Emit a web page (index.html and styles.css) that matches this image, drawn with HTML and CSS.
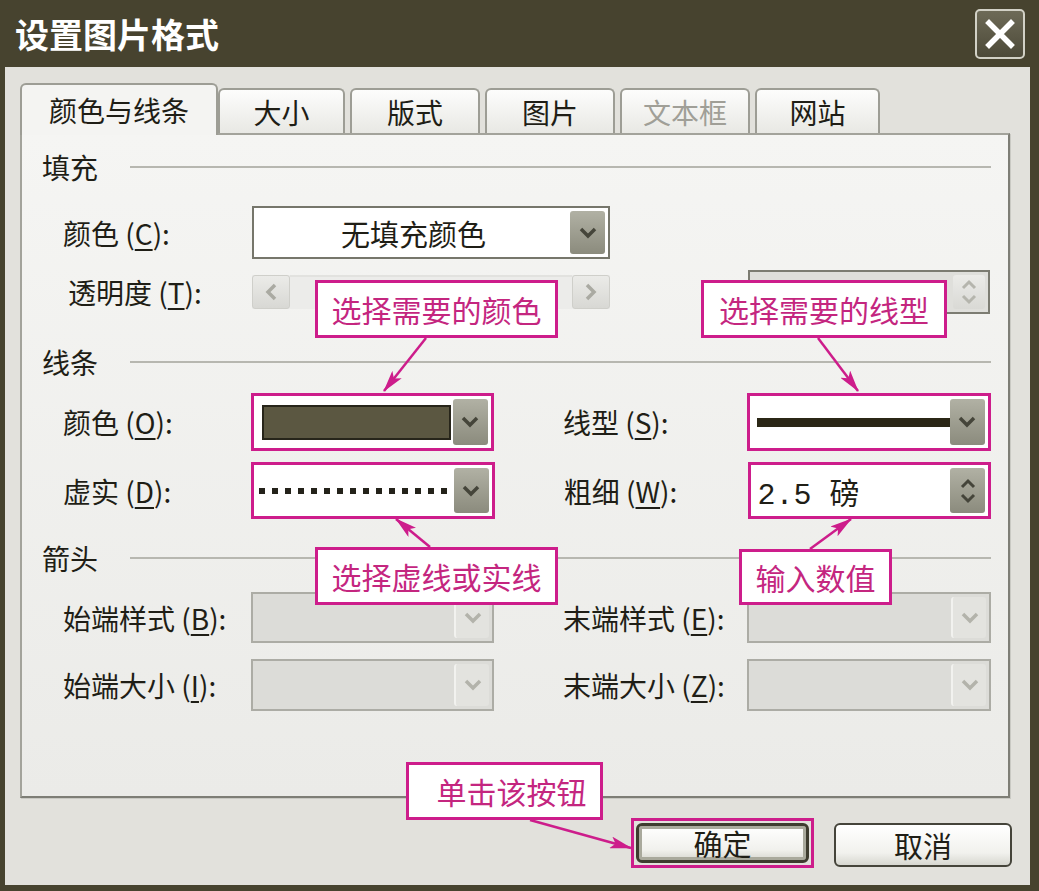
FILE: index.html
```html
<!DOCTYPE html>
<html lang="zh-CN">
<head>
<meta charset="UTF-8">
<title>设置图片格式</title>
<link rel="stylesheet" href="styles.css">
</head>
<body>
  <div class="window">
    <div class="titlebar">
      <span class="title">设置图片格式</span>
      <div class="close-btn">
        <svg width="34" height="34" viewBox="0 0 34 34"><path d="M6 6 L28 28 M28 6 L6 28" stroke="#fff" stroke-width="5.5" stroke-linecap="square"/></svg>
      </div>
    </div>

    <div class="client">
      <div class="tabs">
        <div class="tab active">颜色与线条</div>
        <div class="tab">大小</div>
        <div class="tab">版式</div>
        <div class="tab">图片</div>
        <div class="tab disabled">文本框</div>
        <div class="tab">网站</div>
      </div>

      <div class="panel">
        <div class="section-head"><span>填充</span><i class="rule"></i></div>
        <div class="row row-fill">
          <div class="lbl">颜色 (<u>C</u>):</div>
          <div class="combo wide">
            <span class="combo-text">无填充颜色</span>
            <span class="drop"><svg width="18" height="12" viewBox="0 0 18 12"><path d="M2 2 L9 9 L16 2" fill="none" stroke="currentColor" stroke-width="3.5"/></svg></span>
          </div>
        </div>
        <div class="row row-alpha">
          <div class="lbl lbl-alpha">透明度 (<u>T</u>):</div>
          <div class="slider">
            <span class="sbtn"><svg width="12" height="18" viewBox="0 0 12 18"><path d="M10 2 L3 9 L10 16" fill="none" stroke="currentColor" stroke-width="3.5"/></svg></span>
            <span class="track"></span>
            <span class="sbtn"><svg width="12" height="18" viewBox="0 0 12 18"><path d="M2 2 L9 9 L2 16" fill="none" stroke="currentColor" stroke-width="3.5"/></svg></span>
          </div>
          <div class="spin dis alpha-spin">
            <span class="spin-text"></span>
            <span class="spbtn"><svg width="18" height="30" viewBox="0 0 18 30"><path d="M3 11 L9 5 L15 11 M3 19 L9 25 L15 19" fill="none" stroke="currentColor" stroke-width="3"/></svg></span>
          </div>
        </div>

        <div class="section-head s2"><span>线条</span><i class="rule"></i></div>
        <div class="row row-o">
          <div class="lbl">颜色 (<u>O</u>):</div>
          <div class="combo hl">
            <span class="swatch"></span>
            <span class="drop"><svg width="18" height="12" viewBox="0 0 18 12"><path d="M2 2 L9 9 L16 2" fill="none" stroke="currentColor" stroke-width="3.5"/></svg></span>
          </div>
          <div class="lbl lbl-r">线型 (<u>S</u>):</div>
          <div class="combo hl r">
            <span class="solid-line"></span>
            <span class="drop"><svg width="18" height="12" viewBox="0 0 18 12"><path d="M2 2 L9 9 L16 2" fill="none" stroke="currentColor" stroke-width="3.5"/></svg></span>
          </div>
        </div>
        <div class="row row-d">
          <div class="lbl">虚实 (<u>D</u>):</div>
          <div class="combo hl">
            <span class="dots"></span>
            <span class="drop"><svg width="18" height="12" viewBox="0 0 18 12"><path d="M2 2 L9 9 L16 2" fill="none" stroke="currentColor" stroke-width="3.5"/></svg></span>
          </div>
          <div class="lbl lbl-r">粗细 (<u>W</u>):</div>
          <div class="spin hl r">
            <span class="spin-text">2.5 磅</span>
            <span class="spbtn"><svg width="18" height="30" viewBox="0 0 18 30"><path d="M3 11 L9 5 L15 11 M3 19 L9 25 L15 19" fill="none" stroke="currentColor" stroke-width="3"/></svg></span>
          </div>
        </div>

        <div class="section-head s3"><span>箭头</span><i class="rule"></i></div>
        <div class="row row-b">
          <div class="lbl">始端样式 (<u>B</u>):</div>
          <div class="combo dis">
            <span class="drop"><svg width="18" height="12" viewBox="0 0 18 12"><path d="M2 2 L9 9 L16 2" fill="none" stroke="currentColor" stroke-width="3.5"/></svg></span>
          </div>
          <div class="lbl lbl-r">末端样式 (<u>E</u>):</div>
          <div class="combo dis r">
            <span class="drop"><svg width="18" height="12" viewBox="0 0 18 12"><path d="M2 2 L9 9 L16 2" fill="none" stroke="currentColor" stroke-width="3.5"/></svg></span>
          </div>
        </div>
        <div class="row row-i">
          <div class="lbl">始端大小 (<u>I</u>):</div>
          <div class="combo dis">
            <span class="drop"><svg width="18" height="12" viewBox="0 0 18 12"><path d="M2 2 L9 9 L16 2" fill="none" stroke="currentColor" stroke-width="3.5"/></svg></span>
          </div>
          <div class="lbl lbl-r">末端大小 (<u>Z</u>):</div>
          <div class="combo dis r">
            <span class="drop"><svg width="18" height="12" viewBox="0 0 18 12"><path d="M2 2 L9 9 L16 2" fill="none" stroke="currentColor" stroke-width="3.5"/></svg></span>
          </div>
        </div>
      </div>

      <div class="actions">
        <span class="hl-box"><button class="btn btn-ok">确定</button></span>
        <button class="btn btn-cancel">取消</button>
      </div>
    </div>

    <!-- annotations laid over the dialog -->
    <div class="callout c-color">选择需要的颜色</div>
    <div class="callout c-type">选择需要的线型</div>
    <div class="callout c-dash">选择虚线或实线</div>
    <div class="callout c-value">输入数值</div>
    <div class="callout c-ok">单击该按钮</div>

    <svg class="arrows" width="1039" height="891" viewBox="0 0 1039 891">
      <defs>
        <marker id="head" markerUnits="userSpaceOnUse" markerWidth="22" markerHeight="12" refX="21" refY="6" orient="auto">
          <path d="M0 0 L22 6 L0 12 L5 6 Z" fill="#cd1d8b"/>
        </marker>
      </defs>
      <g stroke="#cd1d8b" stroke-width="2.5" fill="none">
        <line x1="426" y1="338" x2="384" y2="391" marker-end="url(#head)"/>
        <line x1="818" y1="338" x2="858" y2="391" marker-end="url(#head)"/>
        <line x1="430" y1="547" x2="396" y2="519" marker-end="url(#head)"/>
        <line x1="810" y1="549" x2="851" y2="519" marker-end="url(#head)"/>
        <line x1="530" y1="820" x2="631" y2="848" marker-end="url(#head)"/>
      </g>
    </svg>
  </div>
</body>
</html>
```

FILE: styles.css
```css
* {
  box-sizing: border-box;
}
body {
  margin: 0;
  background: #47432f;
  font-family: "Noto Sans CJK SC", "Noto Sans", sans-serif;
  color: #1f1e16;
}
.window {
  position: relative;
  width: 1039px;
  height: 891px;
  background: #47432f;
  overflow: hidden;
}
.titlebar {
  height: 67px;
  display: flex;
  align-items: center;
  justify-content: space-between;
  padding: 0 14px 0 15px;
}
.title {
  color: #fff;
  font-size: 34px;
  font-weight: 700;
  line-height: 1;
}
.close-btn {
  width: 50px;
  height: 50px;
  border: 2px solid #d2d1c6;
  border-radius: 5px;
  background: linear-gradient(#6d6a57, #4d4a39);
  display: flex;
  align-items: center;
  justify-content: center;
}
.client {
  margin: 0 9px 0 5px;
  height: 818px;
  background: #e2e1dc;
  padding: 16px 0 0 15px;
}

/* tabs */
.tabs {
  display: flex;
  align-items: flex-end;
  height: 50px;
  position: relative;
  z-index: 2;
}
.tab {
  width: 130px;
  height: 45px;
  margin-left: 5px;
  display: flex;
  align-items: center;
  justify-content: center;
  font-size: 28px;
  background: linear-gradient(#fdfdfc, #e8e8e4);
  border: 2px solid #9d9d95;
  border-bottom: 0;
  border-radius: 6px 6px 0 0;
}
.tab.active {
  width: 198px;
  height: 52px;
  margin-left: 0;
  margin-bottom: -2px;
  background: #f4f4f2;
}
.tab:nth-child(2) {
  width: 127px;
  margin-left: 0;
}
.tab:last-child {
  width: 125px;
}
.tab.disabled {
  color: #a09f97;
}

/* page */
.panel {
  position: relative;
  z-index: 1;
  width: 990px;
  height: 665px;
  background: linear-gradient(#f5f5f3, #ebebe8);
  border: 2px solid #a3a39b;
  border-right-color: #7e7e76;
  border-bottom-color: #7e7e76;
  box-shadow: 1px 1px 0 #c9c9c3;
  padding: 15px 17px 0 20px;
}
.section-head {
  display: flex;
  align-items: center;
  height: 34px;
  font-size: 28px;
}
.section-head .rule {
  flex: 1;
  height: 2px;
  margin-left: 32px;
  background: #b7b7b0;
}
.s2 {
  margin-top: 31px;
}
.s3 {
  margin-top: 22px;
}
.row {
  display: flex;
  align-items: center;
  padding-left: 21px;
}
.row-fill {
  margin-top: 22px;
  height: 53px;
}
.row-alpha {
  margin-top: 11px;
  height: 44px;
}
.row-o {
  margin-top: 14px;
  height: 58px;
}
.row-d {
  margin-top: 11px;
  height: 57px;
}
.row-b {
  margin-top: 17px;
  height: 51px;
}
.row-i {
  margin-top: 16px;
  height: 52px;
}
.lbl {
  width: 189px;
  font-size: 28px;
  white-space: nowrap;
}
.lbl u {
  text-underline-offset: 4px;
}
.lbl-alpha {
  padding-left: 5px;
}
.lbl-r {
  width: 185px;
  margin-left: 69px;
}

/* controls */
.combo,
.spin {
  width: 244px;
  height: 100%;
  display: flex;
  align-items: center;
  background: #fff;
  border: 2px solid #76766b;
  padding: 3px;
}
.combo.r,
.spin.r {
  width: 245px;
}
.combo.wide {
  width: 358px;
}
.combo-text {
  flex: 1;
  text-align: center;
  font-size: 29px;
}
.drop,
.spbtn {
  width: 35px;
  height: 100%;
  margin-left: auto;
  border-radius: 3px;
  background: linear-gradient(#b1b1a4, #8b8b7d);
  color: #45453a;
  display: flex;
  align-items: center;
  justify-content: center;
}
.hl {
  border: 3px solid #cd1d8b;
}
.swatch {
  width: 189px;
  height: 35px;
  margin-left: 5px;
  background: #5b5741;
  border: 2px solid #27251a;
}
.solid-line {
  width: 193px;
  height: 9px;
  margin-left: 4px;
  background: #2b2716;
}
.dots {
  width: 195px;
  height: 6px;
  margin-left: 2px;
  background: repeating-linear-gradient(90deg, #24221a 0 6px, transparent 6px 13px);
}
.spin-text {
  font-family: "Liberation Mono", "Noto Sans CJK SC", monospace;
  font-size: 30px;
  padding-left: 4px;
}
.combo.dis {
  background: #dcdcd8;
  border-color: #acaca5;
}
.combo.dis .drop {
  background: #e3e3df;
  border-left: 2px solid #f2f2ef;
  color: #b3b3ab;
}
.slider {
  width: 358px;
  height: 34px;
  display: flex;
  background: #ececea;
}
.slider .track {
  flex: 1;
  border-top: 2px solid #e2e2df;
}
.sbtn {
  width: 38px;
  border-radius: 3px;
  background: linear-gradient(#ebebe8, #d8d8d4);
  border: 1px solid #cfcfca;
  color: #aaaaa2;
  display: flex;
  align-items: center;
  justify-content: center;
}
.alpha-spin {
  width: 242px;
  margin-left: 138px;
}
.spin.dis {
  background: #dfdfdb;
  border-color: #7c7c72;
}
.spin.dis .spbtn {
  width: 32px;
  background: linear-gradient(#ebebe8, #d9d9d5);
  color: #b5b5ad;
}

/* buttons */
.actions {
  display: flex;
  justify-content: flex-end;
  align-items: flex-start;
  margin-top: 20px;
  padding-right: 18px;
}
.hl-box {
  display: block;
  padding: 2px;
  border: 3px solid #cd1d8b;
}
.btn {
  display: block;
  height: 42px;
  width: 178px;
  font-family: "Noto Sans CJK SC", sans-serif;
  font-size: 29px;
  color: #1f1e16;
  border: 2px solid #45443a;
  border-radius: 6px;
  background: linear-gradient(#ffffff, #f1f1ed 70%, #d7d7d0);
  padding: 0;
  line-height: 1;
}
.btn-ok {
  width: 173px;
  height: 40px;
  border: 3px solid #3e3c2f;
  box-shadow: inset 0 0 0 3px #a9a99c;
}
.btn-cancel {
  margin-top: 5px;
  margin-left: 20px;
  height: 44px;
}

/* annotations */
.callout {
  position: absolute;
  z-index: 5;
  display: flex;
  align-items: center;
  justify-content: center;
  height: 58px;
  background: #fff;
  border: 3px solid #cd1d8b;
  color: #c4267f;
  font-size: 30px;
  white-space: nowrap;
}
.c-color {
  left: 315px;
  top: 280px;
  width: 243px;
}
.c-type {
  left: 701px;
  top: 280px;
  width: 246px;
}
.c-dash {
  left: 315px;
  top: 547px;
  width: 243px;
}
.c-value {
  left: 739px;
  top: 549px;
  width: 153px;
  height: 56px;
}
.c-ok {
  left: 406px;
  top: 762px;
  width: 197px;
  padding-left: 14px;
}
.arrows {
  position: absolute;
  left: 0;
  top: 0;
  z-index: 6;
  pointer-events: none;
}
```
